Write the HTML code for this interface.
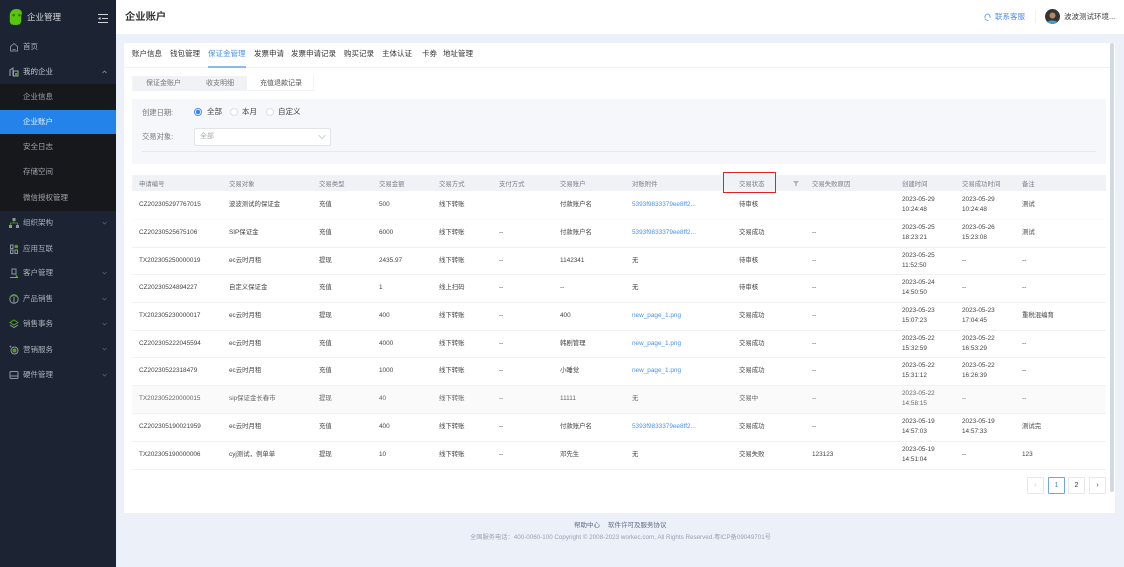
<!DOCTYPE html>
<html lang="zh-CN"><head><meta charset="utf-8"><title>企业账户</title>
<style>
*{box-sizing:border-box;margin:0;padding:0}
html{width:1124px;height:567px;overflow:hidden;background:#ecf0f9}
body{position:relative;width:1124px;height:567px;overflow:hidden;background:#ecf0f9;font-family:"Liberation Sans","Noto Sans CJK SC",sans-serif;color:#555;filter:blur(.35px)}
.a{position:absolute;white-space:nowrap}
#side{left:0;top:0;width:116px;height:567px;background:#1c2433}
#sub{left:0;top:84px;width:116px;height:127px;background:#17181b}
#act{left:0;top:110px;width:116px;height:24px;background:#2483ea}
.m{left:23px;font-size:7.5px;color:#a9b1bb;line-height:10px}
.s{left:23px;font-size:7.5px;color:#9fa5ad;line-height:10px}
.ic{position:absolute;left:9px;width:10px;height:10px}
.ar{position:absolute;left:102px;width:5px;height:4px}
.tab{top:49px;font-size:7.5px;line-height:10px;color:#333}
.st{top:79px;font-size:7px;line-height:10px;color:#777}
.lb{font-size:7.3px;line-height:10px;color:#777}
.rl{top:107px;font-size:7.5px;line-height:10px;color:#444}
.rd{top:108px;width:8px;height:8px;border:1px solid #dcdfe6;border-radius:50%;background:#fff}
table{position:absolute;left:132px;top:175px;width:974px;border-collapse:collapse;table-layout:fixed;font-size:6.4px;color:#444}
th{height:16px;background:#f0f2f6;color:#7a7f88;font-weight:normal;text-align:left;padding-left:7px;overflow:hidden;white-space:nowrap}
td{padding:0 0 0 7px;border-bottom:1px solid #f0f1f3;white-space:nowrap;overflow:hidden;line-height:10px}
tr.r td{height:28px}
tr.t td{height:27px}
tr.n td{border-bottom-color:#fbfbfb}
tr.g td{background:#fafafa;color:#666}
td a{color:#4d90f0}
.pg{top:477px;width:17px;height:17px;border:1px solid #e6e8ec;background:#fff;font-size:7px;line-height:15px;text-align:center;color:#444;border-radius:1px}
</style></head><body>

<div class="a" id="side"></div>
<div class="a" id="sub"></div>
<div class="a" id="act"></div>

<svg class="a" style="left:9px;top:9px" width="15" height="16" viewBox="1 0 13 15.500"><path d="M7.500 0C3.500 0 1 2.600 1 6.500V12c0 1.200 .6 1.400 1 2.400.5 1 1.300 1 1.700.2.400 .9 1.300 1.300 1.800 .5.500 .9 1.500 .9 2 .1.500 .8 1.400 .5 1.800-.4.500 .5 1.300 .4 1.700-.5.400-.9 1-1.100 1-2.300V6.500C14 2.600 11.500 0 7.500 0z" fill="#58c40a"/><circle cx="4.700" cy="6" r="1.200" fill="#2b6d0a"/><circle cx="10.300" cy="6" r="1.200" fill="#2b6d0a"/></svg>
<div class="a" style="left:27px;top:12px;font-size:8.500px;line-height:10px;color:#d4d8dd">企业管理</div>
<svg class="a" style="left:98px;top:14px" width="10" height="9" viewBox="0 0 10 9"><path d="M0 .5h10M4 4.500h6M0 8.500h10" stroke="#d0d4da" fill="none"/><path d="M0 4.500l2.500-1.500v3z" fill="#d0d4da"/></svg>

<svg class="ic" style="top:42px" viewBox="0 0 10 10"><path d="M1.500 9V4.500L5 1.500l3.500 3V9z" fill="none" stroke="#7d8793"/><path d="M3.500 7.500h3" stroke="#4ea31a"/></svg>
<div class="a m" style="top:42px">首页</div>
<svg class="ic" style="top:67px" viewBox="0 0 10 10"><path d="M1 9V3l3-2v8M4.500 9V4H9v5z" fill="none" stroke="#9aa3af"/><path d="M6 6h2v3H6z" fill="#4ea31a"/></svg>
<div class="a m" style="top:67px;color:#c4c9d0">我的企业</div>
<svg class="ar" style="top:70px" viewBox="0 0 5 4"><path d="M.5 3L2.500 1l2 2" fill="none" stroke="#9aa3af" stroke-width=".7"/></svg>

<div class="a s" style="top:92px">企业信息</div>
<div class="a s" style="top:117px;color:#f2f7fd">企业账户</div>
<div class="a s" style="top:142px">安全日志</div>
<div class="a s" style="top:167px">存储空间</div>
<div class="a s" style="top:193px">微信授权管理</div>

<svg class="ic" style="top:218px" viewBox="0 0 10 10"><path d="M3.500 0h3v3h-3zM0 7h3v3H0zM7 7h3v3H7z" fill="#8d96a2"/><path d="M5 3v2M1.500 7V5h7v2" fill="none" stroke="#4ea31a" stroke-width=".8"/></svg>
<div class="a m" style="top:218px">组织架构</div>
<svg class="ic" style="top:244px" viewBox="0 0 10 10"><path d="M1.500 1h2.500v3.500H1.500zM1.500 6h2.500v3.500H1.500zM6 6h2.500v3.500H6z" fill="none" stroke="#8d96a2"/><circle cx="7.300" cy="2.500" r="1.800" fill="#4ea31a"/></svg>
<div class="a m" style="top:244px">应用互联</div>
<svg class="ic" style="top:268px" viewBox="0 0 10 10"><path d="M3 1h4v5H3zM1 9.500h8" fill="none" stroke="#8d96a2"/><path d="M6 5l1 4h2z" fill="#4ea31a"/></svg>
<div class="a m" style="top:268px">客户管理</div>
<svg class="ic" style="top:294px" viewBox="0 0 10 10"><circle cx="5" cy="5" r="4.200" fill="none" stroke="#8d96a2"/><path d="M1 4C2 1 8 1 9 4" fill="none" stroke="#4ea31a"/><path d="M5 3v6" stroke="#8d96a2"/></svg>
<div class="a m" style="top:294px">产品销售</div>
<svg class="ic" style="top:319px" viewBox="0 0 10 10"><path d="M5 1l4 2.500L5 6 1 3.500z" fill="none" stroke="#4ea31a"/><path d="M1 6l4 2.500L9 6" fill="none" stroke="#8d96a2"/></svg>
<div class="a m" style="top:319px">销售事务</div>
<svg class="ic" style="top:345px" viewBox="0 0 10 10"><circle cx="5.500" cy="5.500" r="3.500" fill="none" stroke="#8d96a2"/><circle cx="5.500" cy="5.500" r="2" fill="#4ea31a"/><path d="M.5 1.500h2M1.500 .5v2" stroke="#8d96a2" stroke-width=".7"/></svg>
<div class="a m" style="top:345px">营销服务</div>
<svg class="ic" style="top:370px" viewBox="0 0 10 10"><rect x="1" y="1.500" width="8" height="7" rx="1" fill="none" stroke="#8d96a2"/><path d="M1 6h8" stroke="#8d96a2"/></svg>
<div class="a m" style="top:370px">硬件管理</div>

<svg class="ar" style="top:221px" viewBox="0 0 5 4"><path d="M.5 1l2 2 2-2" fill="none" stroke="#5f6875" stroke-width=".7"/></svg>
<svg class="ar" style="top:271px" viewBox="0 0 5 4"><path d="M.5 1l2 2 2-2" fill="none" stroke="#5f6875" stroke-width=".7"/></svg>
<svg class="ar" style="top:297px" viewBox="0 0 5 4"><path d="M.5 1l2 2 2-2" fill="none" stroke="#5f6875" stroke-width=".7"/></svg>
<svg class="ar" style="top:322px" viewBox="0 0 5 4"><path d="M.5 1l2 2 2-2" fill="none" stroke="#5f6875" stroke-width=".7"/></svg>
<svg class="ar" style="top:347px" viewBox="0 0 5 4"><path d="M.5 1l2 2 2-2" fill="none" stroke="#5f6875" stroke-width=".7"/></svg>
<svg class="ar" style="top:373px" viewBox="0 0 5 4"><path d="M.5 1l2 2 2-2" fill="none" stroke="#5f6875" stroke-width=".7"/></svg>

<div class="a" style="left:116px;top:0;width:1008px;height:34px;background:#fff"></div>
<div class="a" style="left:125px;top:11px;font-size:10.300px;line-height:13px;font-weight:bold;color:#333">企业账户</div>
<svg class="a" style="left:984px;top:13px" width="7" height="8" viewBox="0 0 7 8"><path d="M1 5V3.500a2.500 2.500 0 0 1 5 0V5M1 5.500c0 1.500 2 2 3.500 1.800" fill="none" stroke="#4d8fe8" stroke-width=".8"/></svg>
<div class="a" style="left:995px;top:12px;font-size:7.500px;line-height:10px;color:#4d8fe8">联系客服</div>
<div class="a" style="left:1035px;top:11px;width:1px;height:12px;background:#f0f0f0"></div>
<svg class="a" style="left:1045px;top:9px" width="15" height="15" viewBox="0 0 15 15"><circle cx="7.500" cy="7.500" r="7.500" fill="#3a3431"/><path d="M2.500 13c1-2 8-2 10 0a7.500 7.500 0 0 1-10 0z" fill="#3b9fd6"/><circle cx="7.500" cy="6.500" r="3" fill="#b08a68"/></svg>
<div class="a" style="left:1064px;top:12px;font-size:7.500px;line-height:10px;color:#444">波波测试环境...</div>

<div class="a" style="left:124px;top:43px;width:991px;height:470px;background:#fff"></div>
<div class="a" style="left:1110px;top:43px;width:4px;height:449px;background:#d3d9e2;border-radius:2px"></div>

<div class="a" style="left:124px;top:67px;width:986px;height:1px;background:#f0f1f4"></div>
<div class="a" style="left:208px;top:66px;width:38px;height:1.500px;background:#8db8ef"></div>
<div class="a tab" style="left:132px">账户信息</div>
<div class="a tab" style="left:170px">钱包管理</div>
<div class="a tab" style="left:208px;color:#4d8fe8">保证金管理</div>
<div class="a tab" style="left:254px">发票申请</div>
<div class="a tab" style="left:291px">发票申请记录</div>
<div class="a tab" style="left:344px">购买记录</div>
<div class="a tab" style="left:382px">主体认证</div>
<div class="a tab" style="left:422px">卡券</div>
<div class="a tab" style="left:443px">地址管理</div>

<div class="a" style="left:132px;top:76px;width:115px;height:15px;background:#f0f2f6"></div>
<div class="a" style="left:247px;top:76px;width:67px;height:15px;background:#fff;border:1px solid #f0f2f6;border-top:0;border-left:0"></div>
<div class="a st" style="left:146px">保证金账户</div>
<div class="a st" style="left:206px">收支明细</div>
<div class="a st" style="left:260px;color:#555">充值退款记录</div>

<div class="a" style="left:132px;top:99px;width:974px;height:65px;background:#f5f7fa"></div>
<div class="a lb" style="left:142px;top:108px">创建日期:</div>
<div class="a rd" style="left:194px;border-color:#4d8fe8;background:radial-gradient(circle,#3d86e6 0 2px,#fff 2.400px)"></div>
<div class="a rl" style="left:207px">全部</div>
<div class="a rd" style="left:230px"></div>
<div class="a rl" style="left:242px">本月</div>
<div class="a rd" style="left:266px"></div>
<div class="a rl" style="left:278px">自定义</div>
<div class="a lb" style="left:142px;top:132px">交易对象:</div>
<div class="a" style="left:194px;top:128px;width:137px;height:18px;background:#fff;border:1px solid #e2e4e8;border-radius:2px"></div>
<div class="a" style="left:200px;top:132px;font-size:7px;line-height:10px;color:#aaa">全部</div>
<svg class="a" style="left:318px;top:134px" width="8" height="6" viewBox="0 0 8 6"><path d="M.5 1L4 4.500 7.500 1" fill="none" stroke="#c0c4cc" stroke-width=".8"/></svg>
<div class="a" style="left:142px;top:151px;width:954px;height:1px;background:#e6e8ec"></div>

<table>
<colgroup><col style="width:90px"><col style="width:90px"><col style="width:60px"><col style="width:60px"><col style="width:60px"><col style="width:61px"><col style="width:72px"><col style="width:107px"><col style="width:54px"><col style="width:19px"><col style="width:90px"><col style="width:60px"><col style="width:60px"><col style="width:91px"></colgroup>
<tr><th>申请编号</th><th>交易对象</th><th>交易类型</th><th>交易金额</th><th>交易方式</th><th>支付方式</th><th>交易账户</th><th>对账附件</th><th>交易状态</th><th></th><th>交易失败原因</th><th>创建时间</th><th>交易成功时间</th><th>备注</th></tr>
<tr class="r n"><td>CZ202305297767015</td><td>波波测试的保证金</td><td>充值</td><td>500</td><td>线下转账</td><td></td><td>付款账户名</td><td><a>5393f9833379ee8ff2...</a></td><td>待审核</td><td></td><td></td><td>2023-05-29<br>10:24:48</td><td>2023-05-29<br>10:24:48</td><td>测试</td></tr>
<tr class="r"><td>CZ20230525675106</td><td>SIP保证金</td><td>充值</td><td>6000</td><td>线下转账</td><td>--</td><td>付款账户名</td><td><a>5393f9833379ee8ff2...</a></td><td>交易成功</td><td></td><td>--</td><td>2023-05-25<br>18:23:21</td><td>2023-05-26<br>15:23:08</td><td>测试</td></tr>
<tr class="t"><td>TX202305250000019</td><td>ec云时月租</td><td>提现</td><td>2435.97</td><td>线下转账</td><td>--</td><td>1142341</td><td>无</td><td>待审核</td><td></td><td>--</td><td>2023-05-25<br>11:52:50</td><td>--</td><td>--</td></tr>
<tr class="r"><td>CZ20230524894227</td><td>自定义保证金</td><td>充值</td><td>1</td><td>线上扫码</td><td>--</td><td>--</td><td>无</td><td>待审核</td><td></td><td>--</td><td>2023-05-24<br>14:50:50</td><td>--</td><td>--</td></tr>
<tr class="r"><td>TX202305230000017</td><td>ec云时月租</td><td>提现</td><td>400</td><td>线下转账</td><td>--</td><td>400</td><td><a>new_page_1.png</a></td><td>交易成功</td><td></td><td>--</td><td>2023-05-23<br>15:07:23</td><td>2023-05-23<br>17:04:45</td><td>重税混编育</td></tr>
<tr class="t"><td>CZ202305222045594</td><td>ec云时月租</td><td>充值</td><td>4000</td><td>线下转账</td><td>--</td><td>韩剧管理</td><td><a>new_page_1.png</a></td><td>交易成功</td><td></td><td>--</td><td>2023-05-22<br>15:32:59</td><td>2023-05-22<br>16:53:29</td><td>--</td></tr>
<tr class="r"><td>CZ20230522318479</td><td>ec云时月租</td><td>充值</td><td>1000</td><td>线下转账</td><td>--</td><td>小睡觉</td><td><a>new_page_1.png</a></td><td>交易成功</td><td></td><td>--</td><td>2023-05-22<br>15:31:12</td><td>2023-05-22<br>16:26:39</td><td>--</td></tr>
<tr class="r g"><td>TX202305220000015</td><td>sip保证金长春市</td><td>提现</td><td>40</td><td>线下转账</td><td>--</td><td>11111</td><td>无</td><td>交易中</td><td></td><td>--</td><td>2023-05-22<br>14:58:15</td><td>--</td><td>--</td></tr>
<tr class="r"><td>CZ202305190021959</td><td>ec云时月租</td><td>充值</td><td>400</td><td>线下转账</td><td>--</td><td>付款账户名</td><td><a>5393f9833379ee8ff2...</a></td><td>交易成功</td><td></td><td>--</td><td>2023-05-19<br>14:57:03</td><td>2023-05-19<br>14:57:33</td><td>测试完</td></tr>
<tr class="r"><td>TX202305190000006</td><td>cyj测试，例单单</td><td>提现</td><td>10</td><td>线下转账</td><td>--</td><td>邓先生</td><td>无</td><td>交易失败</td><td></td><td>123123</td><td>2023-05-19<br>14:51:04</td><td>--</td><td>123</td></tr>
</table>

<svg class="a" style="left:793px;top:181px" width="6" height="5" viewBox="0 0 6 5"><path d="M0 0h6L3.700 2.500V5H2.300V2.500z" fill="#aab0b8"/></svg>

<div class="a" style="left:723px;top:172px;width:53px;height:20.500px;border:1.500px solid #e8201c"></div>

<div class="a pg" style="left:1027px;color:#ccc">‹</div>
<div class="a pg" style="left:1048px;border-color:#6ea4ea;color:#4d8fe8">1</div>
<div class="a pg" style="left:1068px">2</div>
<div class="a pg" style="left:1089px">›</div>

<div class="a" style="left:574px;top:521px;font-size:6.500px;line-height:10px;color:#5f6a88">帮助中心</div>
<div class="a" style="left:608px;top:521px;font-size:6.500px;line-height:10px;color:#5f6a88">软件许可及服务协议</div>
<div class="a" style="left:470px;top:533px;font-size:6.250px;line-height:10px;color:#98a0b3">全国服务电话：400-0060-100 Copyright © 2008-2023 workec.com, All Rights Reserved.粤ICP备09049701号</div>
</body></html>
